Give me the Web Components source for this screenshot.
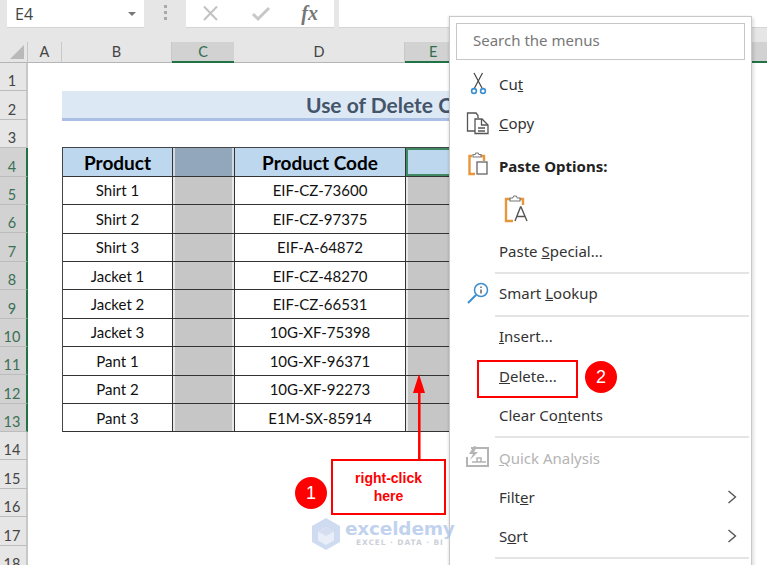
<!DOCTYPE html>
<html lang="en"><head><meta charset="utf-8"><title>Use of Delete</title>
<style>html,body{margin:0;padding:0;width:767px;height:565px;overflow:hidden;background:#fff}</style></head>
<body>
<x-workbook>
  <x-formula-bar cell="E4"></x-formula-bar>
  <x-column-headers></x-column-headers>
  <x-row-headers></x-row-headers>
  <x-sheet></x-sheet>
  <x-context-menu></x-context-menu>
  <x-annotations></x-annotations>
</x-workbook>
<script>
const def=(name,html)=>{customElements.define(name,class extends HTMLElement{
  connectedCallback(){ if(this.shadowRoot) return; const s=this.attachShadow({mode:'open'}); s.innerHTML=typeof html==='function'?html(this):html; }
});};

def('x-workbook',`<style>:host{display:grid;position:relative;width:767px;height:565px;overflow:hidden;grid-template-columns:28px 1fr;grid-template-rows:42px 21px 1fr;background:#fff;font-family:Lato,sans-serif}
::slotted(x-formula-bar){grid-column:1/3}
::slotted(x-column-headers){grid-column:1/3}</style><slot></slot>`);

def('x-formula-bar',h=>`<style>:host{display:flex;background:#e6e6e6;height:42px;align-items:flex-start;font-family:"Liberation Sans",sans-serif}
.box{background:#fff;height:27px;box-shadow:0 1px 0 #d4d4d4;box-sizing:border-box}
.name{margin-left:7px;width:137px;display:flex;align-items:center;justify-content:space-between;padding:0 7px 0 8px;font:16px "Open Sans",sans-serif;color:#444}
.car{width:0;height:0;border:4px solid transparent;border-top:4px solid #777;border-bottom:0;margin-right:1px}
.grip{width:42px;display:flex;flex-direction:column;gap:3px;align-items:center;padding-top:5px}
.grip i{width:3px;height:3px;background:#a9a9a9}
.icons{width:148px;display:flex;align-items:center;justify-content:space-between;padding:0 16px 0 15px}
.fx{font:italic bold 20px "Liberation Serif",serif;color:#777}
.input{margin-left:5px;flex:1}</style>
<div class="box name">${h.getAttribute('cell')}<span class="car"></span></div>
<div class="grip"><i></i><i></i><i></i></div>
<div class="box icons">
<svg width="19" height="17" viewBox="0 0 19 17"><path d="M3 1.500 16 15M16 1.500 3 15" stroke="#c2c2c2" stroke-width="2" fill="none"/></svg>
<svg width="20" height="17" viewBox="0 0 20 17"><path d="M2 9l5 5L18 3" stroke="#c8c8c8" stroke-width="3" fill="none"/></svg>
<span class="fx">fx</span></div>
<div class="box input"></div>`);

def('x-column-headers',`<style>:host{display:grid;grid-template-columns:28px 34px 110px 62px 171px 1fr;height:21px;background:#e6e6e6;font:14.5px Lato,sans-serif;color:#444}
div{display:flex;align-items:center;justify-content:center;box-sizing:border-box;border-bottom:1px solid #b5b5b5;border-right:1px solid #c8c8c8;padding-bottom:1px}
.sel{background:#d2d2d2;border-bottom:2px solid #217346;color:#2f6d4e;border-right:0}
.corner{justify-content:flex-end;align-items:flex-end;padding:0 3px 3px 0}
.corner svg{display:block}</style>
<div class="corner"><svg width="14" height="14" viewBox="0 0 14 14"><path d="M14 0V14H0Z" fill="#b9b9b9"/></svg></div>
<div>A</div><div>B</div><div class="sel">C</div><div>D</div><div class="sel" style="justify-content:flex-start;padding-left:24px">E</div>`);

def('x-row-headers',h=>{let r='';for(let i=1;i<=18;i++){const sel=i>=4&&i<=13;r+=`<div class="${sel?'sel':''}">${i}</div>`}
return `<style>:host{display:block;width:28px;height:502px;overflow:hidden;background:#e6e6e6;font:14.5px Lato,sans-serif;color:#444}
div{height:28.4px;box-sizing:border-box;display:flex;align-items:flex-end;justify-content:center;padding:0 2px 1px 0;border-bottom:1px solid #bcbcbc;border-right:2px solid #c8c8c8}
.sel{background:#d2d2d2;border-right:2px solid #217346;color:#3c6f55}</style>${r}`});

def('x-sheet',`<style>:host{display:block;overflow:hidden;position:relative;height:502px;padding-left:34px;box-sizing:border-box}
.spacer{height:28.4px}
.title{height:30px;box-sizing:border-box;background:#dce9f5;border-bottom:3px solid #a9bfe6;font:bold 21px Lato,sans-serif;color:#44546a;padding-left:244px;line-height:27px;white-space:nowrap;width:400px}
.gap{height:27px}</style>
<div class="spacer"></div><div class="title">Use of Delete C</div><div class="gap"></div><x-data-table></x-data-table>`);

const rows=[["Shirt 1","EIF-CZ-73600"],["Shirt 2","EIF-CZ-97375"],["Shirt 3","EIF-A-64872"],["Jacket 1","EIF-CZ-48270"],["Jacket 2","EIF-CZ-66531"],["Jacket 3","10G-XF-75398"],["Pant 1","10G-XF-96371"],["Pant 2","10G-XF-92273"],["Pant 3","E1M-SX-85914"]];
def('x-data-table',`<style>:host{display:grid;grid-template-columns:110px 62px 171px 60px;grid-auto-rows:28.4px;width:403px;font:15px Lato,sans-serif;color:#111;border-top:1.5px solid #444;border-left:1.5px solid #444;box-sizing:border-box;margin-top:-1px}
div{display:flex;align-items:center;justify-content:center;box-sizing:border-box;border-right:1.5px solid #333;border-bottom:1.5px solid #333;min-width:0}
.h{background:#bdd7ee;font:bold 19px Lato,sans-serif;color:#000}
.g{background:#c6c6c6;box-shadow:inset 2px 0 0 #e8e8e8,inset -2px 0 0 #e8e8e8}
.gh{background:#93a7bc;box-shadow:inset 2px 0 0 #d0d8e0,inset -2px 0 0 #d0d8e0}
.act{background:#bdd7ee;box-shadow:inset 0 0 0 2px #3f8a63}</style>
<div class="h">Product</div><div class="gh"></div><div class="h">Product Code</div><div class="act"></div>`+
rows.map(r=>`<div>${r[0]}</div><div class="g"></div><div>${r[1]}</div><div class="g"></div>`).join(''));

def('x-menu-item',h=>`<style>:host{display:grid;grid-template-columns:49px 1fr 25px;align-items:center;height:${h.getAttribute('h')||39.5}px;font:15px "Noto Sans",sans-serif;color:${h.hasAttribute('disabled')?'#b4b4b4':'#333'}}
.ic{display:flex;padding:0 0 3px 16px;align-items:center}
.tx{padding-bottom:3px}
.ar{display:flex;padding-bottom:3px}
:host([bold]){font-weight:bold;color:#222}
:host([bold]) .tx{padding:2px 0 0}
:host([disabled]) .tx{padding-bottom:1px}
::slotted(svg){flex:none}</style>
<div class="ic"><slot name="icon"></slot></div><div class="tx"><slot></slot></div>
<div class="ar">${h.hasAttribute('arrow')?'<svg width="12" height="16" viewBox="0 0 12 16"><path d="M2.500 2l7 6-7 6" stroke="#555" stroke-width="1.400" fill="none"/></svg>':''}</div>`);
def('x-menu-sep',`<style>:host{display:block;height:2px;background:#e4e4e4;margin:0 2px 0 45px}</style>`);

def('x-context-menu',`<style>:host{position:absolute;left:449px;top:16px;width:303px;height:560px;box-sizing:border-box;background:#fff;border:1px solid #c9c9c9;box-shadow:2px 2px 3px rgba(0,0,0,.12),-1px 0 2px rgba(0,0,0,.1);padding:6px 6px 0 0;display:block}
.search{margin:0 0 6px 6px;height:37px;box-sizing:border-box;border:1px solid #c6c6c6;padding:0 0 3px 16px;display:flex;align-items:center;font:15px "Noto Sans",sans-serif;color:#777}
.list{margin-right:-6px}
svg{display:block}
</style>
<div class="search">Search the menus</div>
<div class="list">
<x-menu-item h="39"><svg slot="icon" width="24" height="24" viewBox="0 0 24 24" fill="none"><path d="M8 1l8 15M16.500 1L8.500 16" stroke="#444" stroke-width="1.200"/><circle cx="8" cy="19" r="2.400" stroke="#3b8ed0" stroke-width="1.600"/><circle cx="17" cy="19" r="2.400" stroke="#3b8ed0" stroke-width="1.600"/></svg><span>Cu<u>t</u></span></x-menu-item>
<x-menu-item h="39"><svg slot="icon" width="24" height="24" viewBox="0 0 24 24" fill="none" stroke="#555" stroke-width="1.300"><path d="M9 20H1.500V2H10l2 2.500V7"/><path d="M9 8h7l6 6v8.500H9z" fill="#fff"/><path d="M15.500 8v6H22M12 17h7M12 20h7"/></svg><span><u>C</u>opy</span></x-menu-item>
<x-menu-item h="42" bold><svg slot="icon" width="24" height="24" viewBox="0 0 24 24" fill="none"><path d="M6 4H3.500v18H9" stroke="#e8963a" stroke-width="2.400"/><path d="M15 4h3v5" stroke="#e8963a" stroke-width="2.400"/><path d="M7 5V2.500h2L10 1h2l1 1.500h2V5z" stroke="#777" stroke-width="1.100" fill="#fff"/><rect x="11" y="10" width="10" height="12" stroke="#666" stroke-width="1.300" fill="#fff"/></svg><span>Paste Options:</span></x-menu-item>
<x-menu-item h="46"><svg slot="icon" style="margin:3px 0 0 38px" width="26" height="28" viewBox="0 0 26 28" fill="none"><path d="M6 4H2v22h7" stroke="#e8963a" stroke-width="2.400"/><path d="M15 4h4v6" stroke="#e8963a" stroke-width="2.400"/><path d="M6 6V3h2.500L10 1h2l1.500 2H16v3z" stroke="#777" stroke-width="1.100" fill="#fff"/><path d="M11 26l5.500-14h.5L23 26M13 21.500h8" stroke="#555" stroke-width="1.400"/></svg></x-menu-item>
<x-menu-item h="40"><span>Paste <u>S</u>pecial...</span></x-menu-item>
<x-menu-sep></x-menu-sep>
<x-menu-item h="41"><svg slot="icon" width="24" height="24" viewBox="0 0 24 24" fill="none"><circle cx="15" cy="9" r="6.500" stroke="#3b8ed0" stroke-width="1.500"/><path d="M10 14L2 22" stroke="#3b8ed0" stroke-width="2"/><path d="M15 8.500V12.500M15 5.500v1.500" stroke="#666" stroke-width="1.500"/></svg><span>Smart <u>L</u>ookup</span></x-menu-item>
<x-menu-sep></x-menu-sep>
<x-menu-item h="40"><span><u>I</u>nsert...</span></x-menu-item>
<x-menu-item h="40"><span><u>D</u>elete...</span></x-menu-item>
<x-menu-item h="39"><span>Clear Co<u>n</u>tents</span></x-menu-item>
<x-menu-sep></x-menu-sep>
<x-menu-item h="40" disabled><svg slot="icon" width="24" height="24" viewBox="0 0 24 24" fill="none"><path d="M5 3h17v18H1v-9" stroke="#b4b4b4" stroke-width="2"/><path d="M8 1L3 9h4l-3 6 8-8H8l3-5z" fill="#b4b4b4"/><path d="M6 17h14M11 13h4v4h-4z" stroke="#b4b4b4" stroke-width="1.500"/></svg><span><u>Q</u>uick Analysis</span></x-menu-item>
<x-menu-item h="40" arrow><span>Filt<u>e</u>r</span></x-menu-item>
<x-menu-item h="39" arrow><span>S<u>o</u>rt</span></x-menu-item>
<x-menu-sep></x-menu-sep>
</div>`);

def('x-badge',h=>`<style>:host{position:absolute;left:${h.getAttribute('x')}px;top:${h.getAttribute('y')}px;width:32px;height:32px;border-radius:50%;background:#f00;color:#fff;display:flex;align-items:center;justify-content:center;font:18px "Liberation Sans",sans-serif}</style><slot></slot>`);

def('x-annotations',`<style>:host{position:absolute;inset:0;display:block;pointer-events:none}
.del{position:absolute;left:477px;top:360px;width:101px;height:38px;box-sizing:border-box;border:2px solid #f00}
.call{position:absolute;left:331px;top:459px;width:115px;height:56px;box-sizing:border-box;border:2px solid #f00;background:#fff;color:#f00;font:bold 14px/18px "Liberation Sans",sans-serif;display:flex;align-items:center;justify-content:center;text-align:center;padding-bottom:1px}
svg{position:absolute;left:0;top:0}
.t1{position:absolute;left:345px;top:518px;font:bold 18.500px "DejaVu Sans",sans-serif;color:rgba(170,193,232,.72);letter-spacing:-.2px}
.t2{position:absolute;left:356px;top:538px;font:bold 7.500px "DejaVu Sans",sans-serif;color:rgba(190,196,206,.8);letter-spacing:.9px;white-space:nowrap}
</style>
<svg width="767" height="565" viewBox="0 0 767 565" fill="none"><path d="M419.300 460V391" stroke="#f00" stroke-width="2.500"/><path d="M419 374l6 19h-12z" fill="#f00"/>
<g transform="translate(312 518)"><path d="M14 0L28 8v16L14 32 0 24V8z" fill="#c6d5ef" opacity=".85"/><path d="M14 9l8 4.500v9L14 27l-8-4.500v-9z" fill="#e9eef8"/><path d="M14 9l8 4.500-8 4.500-8-4.500z" fill="#d5def0"/></g></svg>
<div class="call">right-click<br>here</div>
<div class="del"></div>
<x-badge x="295" y="477">1</x-badge>
<x-badge x="585" y="361">2</x-badge>
<div class="t1">exceldemy</div>
<div class="t2">EXCEL · DATA · BI</div>`);
</script>
</body></html>
